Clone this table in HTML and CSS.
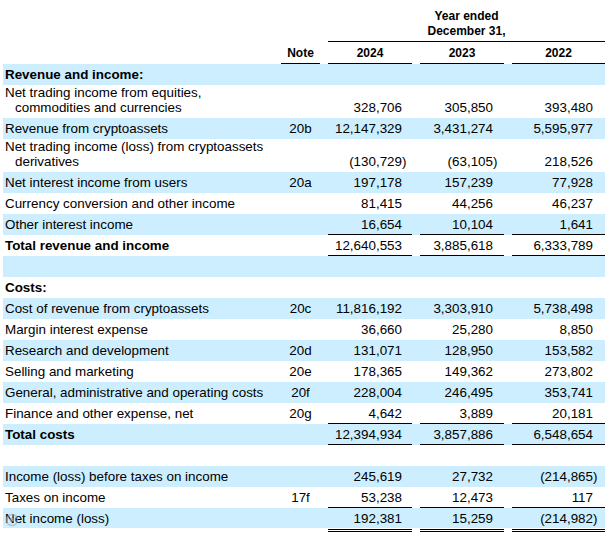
FILE: index.html
```html
<!DOCTYPE html>
<html>
<head>
<meta charset="utf-8">
<link rel="stylesheet" href="styles.css">
</head>
<body>
<div class="sheet">
  <div class="head1">
    <div class="period">Year ended<br>December 31,</div>
  </div>
  <div class="head2">
    <div></div>
    <div class="hc">Note</div>
    <div class="hc">2024</div>
    <div class="hc">2023</div>
    <div class="hc">2022</div>
  </div>

  <div class="row blue"><div class="lbl b">Revenue and income:</div></div>
  <div class="row two">
    <div class="lbl">Net trading income from equities,<div class="cont">commodities and currencies</div></div>
    <div class="note"></div>
    <div class="num c1">328,706</div><div class="num c2">305,850</div><div class="num c3">393,480</div>
  </div>
  <div class="row blue">
    <div class="lbl">Revenue from cryptoassets</div><div class="note">20b</div>
    <div class="num c1">12,147,329</div><div class="num c2">3,431,274</div><div class="num c3">5,595,977</div>
  </div>
  <div class="row two">
    <div class="lbl">Net trading income (loss) from cryptoassets<div class="cont">derivatives</div></div>
    <div class="note"></div>
    <div class="num c1"><span class="neg">(130,729)</span></div><div class="num c2"><span class="neg">(63,105)</span></div><div class="num c3">218,526</div>
  </div>
  <div class="row blue">
    <div class="lbl">Net interest income from users</div><div class="note">20a</div>
    <div class="num c1">197,178</div><div class="num c2">157,239</div><div class="num c3">77,928</div>
  </div>
  <div class="row">
    <div class="lbl">Currency conversion and other income</div><div class="note"></div>
    <div class="num c1">81,415</div><div class="num c2">44,256</div><div class="num c3">46,237</div>
  </div>
  <div class="row blue">
    <div class="lbl">Other interest income</div><div class="note"></div>
    <div class="num c1 u">16,654</div><div class="num c2 u">10,104</div><div class="num c3 u">1,641</div>
  </div>
  <div class="row">
    <div class="lbl b">Total revenue and income</div><div class="note"></div>
    <div class="num c1 u">12,640,553</div><div class="num c2 u">3,885,618</div><div class="num c3 u">6,333,789</div>
  </div>
  <div class="row blue"></div>

  <div class="row"><div class="lbl b">Costs:</div></div>
  <div class="row blue">
    <div class="lbl">Cost of revenue from cryptoassets</div><div class="note">20c</div>
    <div class="num c1">11,816,192</div><div class="num c2">3,303,910</div><div class="num c3">5,738,498</div>
  </div>
  <div class="row">
    <div class="lbl">Margin interest expense</div><div class="note"></div>
    <div class="num c1">36,660</div><div class="num c2">25,280</div><div class="num c3">8,850</div>
  </div>
  <div class="row blue">
    <div class="lbl">Research and development</div><div class="note">20d</div>
    <div class="num c1">131,071</div><div class="num c2">128,950</div><div class="num c3">153,582</div>
  </div>
  <div class="row">
    <div class="lbl">Selling and marketing</div><div class="note">20e</div>
    <div class="num c1">178,365</div><div class="num c2">149,362</div><div class="num c3">273,802</div>
  </div>
  <div class="row blue">
    <div class="lbl">General, administrative and operating costs</div><div class="note">20f</div>
    <div class="num c1">228,004</div><div class="num c2">246,495</div><div class="num c3">353,741</div>
  </div>
  <div class="row">
    <div class="lbl">Finance and other expense, net</div><div class="note">20g</div>
    <div class="num c1 u">4,642</div><div class="num c2 u">3,889</div><div class="num c3 u">20,181</div>
  </div>
  <div class="row blue">
    <div class="lbl b">Total costs</div><div class="note"></div>
    <div class="num c1 u">12,394,934</div><div class="num c2 u">3,857,886</div><div class="num c3 u">6,548,654</div>
  </div>
  <div class="row"></div>

  <div class="row blue">
    <div class="lbl">Income (loss) before taxes on income</div><div class="note"></div>
    <div class="num c1">245,619</div><div class="num c2">27,732</div><div class="num c3"><span class="neg">(214,865)</span></div>
  </div>
  <div class="row">
    <div class="lbl">Taxes on income</div><div class="note">17f</div>
    <div class="num c1 u">53,238</div><div class="num c2 u">12,473</div><div class="num c3 u">117</div>
  </div>
  <div class="row last">
    <div class="lbl">Net income (loss)</div><div class="note"></div>
    <div class="num c1 uu">192,381</div><div class="num c2 uu">15,259</div><div class="num c3 uu"><span class="neg">(214,982)</span></div>
  </div>
  <svg class="wm" width="14" height="14" viewBox="0 0 14 14"><circle cx="7" cy="7" r="5.5" fill="none" stroke="#9aa6b0" stroke-width="1.4"/><circle cx="7" cy="7" r="2" fill="#9aa6b0"/></svg>
</div>
</body>
</html>
```

FILE: styles.css
```css
html, body {
  margin: 0;
  padding: 0;
  background: #ffffff;
}

body {
  font-family: "Liberation Sans", Arial, sans-serif;
  font-size: 13.4px;
  color: #000000;
}

.sheet {
  position: relative;
  width: 602px;
  margin-left: 3px;
}

.head1,
.head2,
.row {
  display: grid;
  grid-template-columns: 270px 39px 84px 84px 93px;
  column-gap: 8px;
}

.head1 .period {
  grid-column: 3 / 6;
  text-align: center;
  font-weight: bold;
  font-size: 12px;
  line-height: 15px;
  padding: 9px 0 2px;
  border-bottom: 1px solid #000;
}

.head2 {
  margin-top: 1px;
}

.hc {
  text-align: center;
  font-weight: bold;
  font-size: 12px;
  line-height: 15px;
  padding: 3px 0 2px;
  border-bottom: 1px solid #000;
}

.row {
  height: 21px;
  line-height: 15px;
}

.row > div {
  box-sizing: border-box;
  padding-top: 3px;
  white-space: nowrap;
}

.row.blue {
  background: #cceeff;
}

.row.two {
  height: 33px;
}

.row.two > div {
  padding-top: 0;
}

.row.two > .num,
.row.two > .note {
  padding-top: 15px;
}

.lbl {
  padding-left: 2px;
}

.lbl.b {
  font-weight: bold;
}

.cont {
  padding-left: 10px;
}

.note {
  text-align: center;
}

.num {
  text-align: right;
}

.c1 { padding-right: 10px; }
.c2 { padding-right: 11px; }
.c3 { padding-right: 12px; }

.neg {
  margin-right: -0.333em;
}

.u {
  border-bottom: 1px solid #000;
}

.row.last {
  height: 24px;
  background: linear-gradient(#cceeff, #cceeff) top left / 100% 20px no-repeat;
}

.uu {
  border-bottom: 3px double #000;
}

.wm {
  position: absolute;
  left: 2px;
  bottom: 5px;
  opacity: 0.6;
}
```
